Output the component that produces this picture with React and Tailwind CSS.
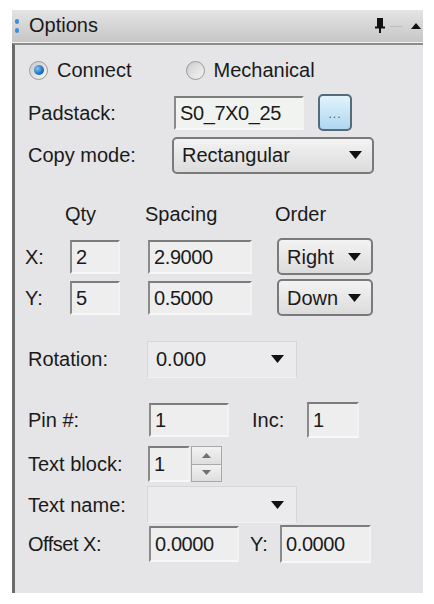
import React from "react";

const font = { fontFamily: '"Liberation Sans", Arial, sans-serif' };

// sunken classic text box
function Field({ value, className = "" }) {
  return (
    <div
      className={`flex items-center h-[34px] pl-[4px] bg-[#eeeeef] border-t-2 border-l-2 border-t-[#7c7c7c] border-l-[#8a8a8a] border-b-2 border-r-2 border-b-[#f7f7f7] border-r-[#f2f2f2] text-[20px] leading-none tracking-[-0.4px] text-[#1a1a1a] ${className}`}
    >
      {value}
    </div>
  );
}

function Arrow() {
  return (
    <svg width="13" height="8" viewBox="0 0 13 8" className="shrink-0">
      <path d="M0 0 H13 L6.5 8 Z" fill="#111" />
    </svg>
  );
}

// rounded dropdown button
function Drop({ value, className = "" }) {
  return (
    <div
      className={`flex items-center justify-between h-[37px] pl-[8px] pr-[10px] rounded-[5px] border-2 border-[#7a7a7a] bg-gradient-to-b from-[#f3f3f3] to-[#dcdcdc] text-[20px] text-[#1a1a1a] ${className}`}
    >
      <span>{value}</span>
      <Arrow />
    </div>
  );
}

// flat combo box
function Combo({ value }) {
  return (
    <div className="flex items-center justify-between w-[150px] h-[37px] pl-[8px] pr-[12px] bg-[#ebebed] border border-[#d6d6d8] border-b-[#f2f2f2] text-[20px] text-[#1a1a1a]">
      <span>{value}</span>
      <Arrow />
    </div>
  );
}

function Radio({ checked, label }) {
  return (
    <div className="flex items-center gap-[9px]">
      <div className="w-[19px] h-[19px] rounded-full border border-[#9a9a9a] bg-gradient-to-br from-[#c9c9c9] to-[#f6f6f6] flex items-center justify-center">
        {checked ? (
          <div className="w-[10px] h-[10px] rounded-full bg-[radial-gradient(circle_at_35%_35%,#7fc4f4,#1c6fc2_60%,#0d4b8f)]" />
        ) : (
          <div className="w-[13px] h-[13px] rounded-full bg-gradient-to-br from-[#d4d4d4] to-[#f0f0f0]" />
        )}
      </div>
      <span className="text-[20px] text-[#1a1a1a]">{label}</span>
    </div>
  );
}

export default function App() {
  return (
    <div className="w-[434px] h-[604px] bg-white pt-[10px] pl-[12px]" style={font}>
      <div className="w-[411px] h-[583px] flex flex-col">
        {/* Title bar */}
        <div className="h-[32px] flex items-center bg-gradient-to-b from-[#e4e4e4] to-[#c6c6c6] pr-[2px]">
          <div className="flex flex-col gap-[4px] ml-[3px] mr-[10px]">
            <span className="w-[4px] h-[5px] rounded-full bg-[#3a8ee0]" />
            <span className="w-[4px] h-[5px] rounded-full bg-[#3a8ee0]" />
          </div>
          <span className="text-[20px] text-[#1a1a1a] -mt-[2px]">Options</span>
          <div className="ml-auto flex items-center">
            <svg width="12" height="16" viewBox="0 0 12 16">
              <path d="M3 1 H9 M4 1 V9 M8 1 V9 M6 1 V9 M1 9.5 H11 M6 10 V15" stroke="#111" strokeWidth="2" fill="none" />
            </svg>
            <span className="w-[12px] h-[1px] bg-[#bcbcbc] ml-[4px] mr-[9px]" />
            <svg width="10" height="6" viewBox="0 0 10 6">
              <path d="M0 6 L5 0 L10 6 Z" fill="#111" />
            </svg>
          </div>
        </div>
        <div className="h-[1px] bg-[#f2f2f2]" />

        {/* Body */}
        <div className="flex-1 bg-[#e5e5e7] border-t-2 border-t-[#8c8c8c] border-l-[3px] border-l-[#6a6a6a] pl-[13px]">
          {/* radios */}
          <div className="flex items-center h-[28px] mt-[11px] pl-[1px]">
            <Radio checked label="Connect" />
            <div className="ml-[54px]">
              <Radio label="Mechanical" />
            </div>
          </div>

          {/* Padstack */}
          <div className="flex items-center h-[37px] mt-[10px]">
            <span className="w-[146px] text-[20px] text-[#1a1a1a]">Padstack:</span>
            <Field value="S0_7X0_25" className="w-[130px] bg-[#f1f3f1]" />
            <div className="ml-[14px] w-[34px] h-[37px] rounded-[5px] border-2 border-[#566b7a] bg-gradient-to-b from-[#e3f3fc] to-[#aed7f0] flex items-end justify-center pb-[9px]">
              <span className="text-[12px] leading-none tracking-[1px] text-[#2d5f8a]">...</span>
            </div>
          </div>

          {/* Copy mode */}
          <div className="flex items-center h-[36px] mt-[6px]">
            <span className="w-[144px] text-[20px] text-[#1a1a1a]">Copy mode:</span>
            <Drop value="Rectangular" className="w-[202px] h-[37px]" />
          </div>

          {/* header */}
          <div className="flex items-center h-[24px] mt-[29px] text-[20px] text-[#1a1a1a]">
            <span className="ml-[37px] w-[80px]">Qty</span>
            <span className="w-[130px]">Spacing</span>
            <span>Order</span>
          </div>

          {/* X row */}
          <div className="flex items-center h-[37px] mt-[12px] text-[20px] text-[#1a1a1a]">
            <span className="w-[42px] -ml-[3px]">X:</span>
            <Field value="2" className="w-[50px] ml-[3px]" />
            <Field value="2.9000" className="w-[104px] ml-[28px]" />
            <Drop value="Right" className="w-[96px] ml-[25px]" />
          </div>

          {/* Y row */}
          <div className="flex items-center h-[37px] mt-[4px] text-[20px] text-[#1a1a1a]">
            <span className="w-[42px] -ml-[3px]">Y:</span>
            <Field value="5" className="w-[50px] ml-[3px]" />
            <Field value="0.5000" className="w-[104px] ml-[28px]" />
            <Drop value="Down" className="w-[96px] ml-[25px]" />
          </div>

          {/* Rotation */}
          <div className="flex items-center h-[38px] mt-[24px]">
            <span className="w-[119px] text-[20px] text-[#1a1a1a]">Rotation:</span>
            <Combo value="0.000" />
          </div>

          {/* Pin */}
          <div className="flex items-center h-[36px] mt-[24px] text-[20px] text-[#1a1a1a]">
            <span className="w-[121px]">Pin #:</span>
            <Field value="1" className="w-[80px]" />
            <span className="ml-[23px] w-[55px]">Inc:</span>
            <Field value="1" className="w-[52px] h-[36px]" />
          </div>

          {/* Text block */}
          <div className="flex items-center h-[36px] mt-[8px] text-[20px] text-[#1a1a1a]">
            <span className="w-[120px]">Text block:</span>
            <Field value="1" className="w-[42px] h-[36px]" />
            <div className="ml-[1px] w-[31px] h-[36px] flex flex-col border border-[#a8a8a8] bg-[#e2e2e2]">
              <div className="flex-1 flex items-center justify-center border-b border-[#a8a8a8] bg-gradient-to-b from-[#f2f2f2] to-[#dedede]">
                <svg width="9" height="5" viewBox="0 0 9 5"><path d="M0 5 L4.5 0 L9 5 Z" fill="#707070" /></svg>
              </div>
              <div className="flex-1 flex items-center justify-center bg-gradient-to-b from-[#f2f2f2] to-[#dedede]">
                <svg width="9" height="5" viewBox="0 0 9 5"><path d="M0 0 L9 0 L4.5 5 Z" fill="#707070" /></svg>
              </div>
            </div>
          </div>

          {/* Text name */}
          <div className="flex items-center h-[37px] mt-[4px]">
            <span className="w-[119px] text-[20px] text-[#1a1a1a]">Text name:</span>
            <Combo value="" />
          </div>

          {/* Offset */}
          <div className="flex items-center h-[38px] mt-[2px] text-[20px] text-[#1a1a1a]">
            <span className="w-[121px] tracking-[-0.5px]">Offset X:</span>
            <Field value="0.0000" className="w-[90px] h-[36px]" />
            <span className="ml-[11px] w-[30px]">Y:</span>
            <Field value="0.0000" className="w-[91px] h-[38px]" />
          </div>
        </div>
      </div>
    </div>
  );
}
